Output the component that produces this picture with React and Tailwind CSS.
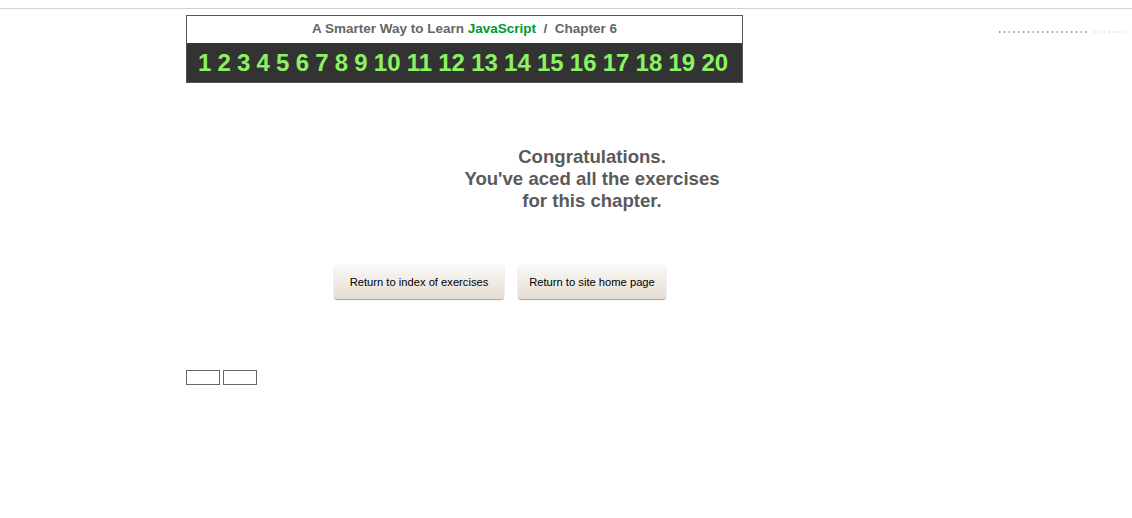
import React from "react";

const chapters = Array.from({ length: 20 }, (_, i) => i + 1);

const Button = ({ children, width }) => (
  <button
    className={`h-[34px] ${width} rounded-[3px] bg-gradient-to-b from-[#fbfaf8] to-[#e5dcd3] text-[11.2px] text-black shadow-[0_1px_1px_rgba(0,0,0,0.35),0_0_1px_rgba(0,0,0,0.2)]`}
  >
    {children}
  </button>
);

export default function App() {
  return (
    <div className="min-h-[518px] bg-white font-['Liberation_Sans',Arial,sans-serif]">
      <div className="h-[9px] border-b border-[#d2d2d2]" />
      <div className="flex items-start">
        <div className="ml-[186px] mt-[6px] w-[557px]">
          <div className="border border-[#555]">
            <div className="flex h-[27px] items-center justify-center text-[13.5px] font-bold text-[#666]">
              <span>
                A Smarter Way to Learn <span className="text-[#00992e]">JavaScript</span>
                &nbsp; / &nbsp;Chapter 6
              </span>
            </div>
            <div className="flex h-[39px] items-center justify-center bg-[#333] pr-[3px] pt-[1px] text-[24px] font-bold text-[#8cf262]">
              {chapters.map((n, i) => (
                <span key={n} className={i > 0 ? "ml-[6.2px]" : ""}>
                  {n}
                </span>
              ))}
            </div>
          </div>
        </div>
        <div className="ml-auto mt-[22px] flex w-[135px]">
          <svg width="135" height="2" className="block">
            <line x1="2" y1="1" x2="93" y2="1" stroke="#777" strokeWidth="1.3" strokeDasharray="1.3 3.5" />
            <line x1="97" y1="1" x2="135" y2="1" stroke="#d4d4e4" strokeWidth="1.3" strokeDasharray="1.3 3.5" />
          </svg>
        </div>
      </div>

      <div className="ml-[392px] mt-[63px] w-[400px] text-center text-[18.6px] font-bold leading-[22px] text-[#5a5a5a]">
        <p>Congratulations.</p>
        <p>You've aced all the exercises</p>
        <p>for this chapter.</p>
      </div>

      <div className="ml-[334px] mt-[53px] flex gap-[14px]">
        <Button width="w-[170px]">Return to index of exercises</Button>
        <Button width="w-[148px]">Return to site home page</Button>
      </div>

      <div className="ml-[186px] mt-[71px] flex gap-[3px]">
        <div className="h-[15px] w-[34px] border border-[#666]" />
        <div className="h-[15px] w-[34px] border border-[#666]" />
      </div>
    </div>
  );
}
